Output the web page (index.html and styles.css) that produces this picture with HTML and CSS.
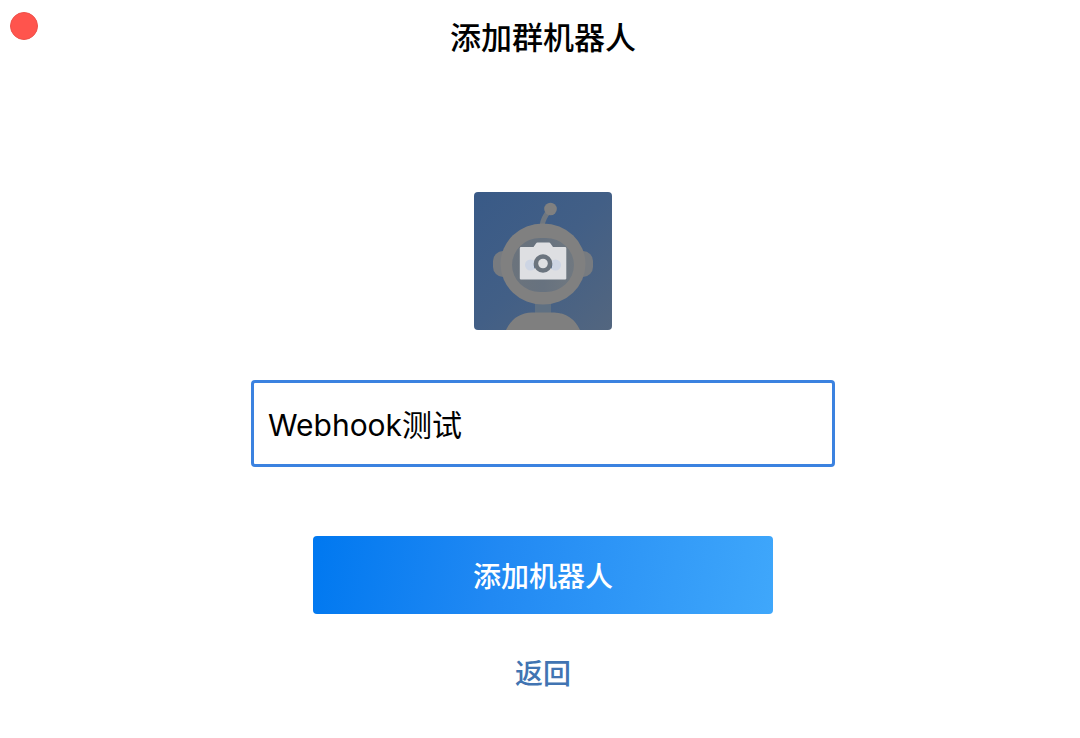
FILE: index.html
```
<!doctype html>
<html lang="zh-CN">

<head>
    <meta charset="utf-8">
    <title>添加群机器人</title>
    <link rel="stylesheet" href="styles.css">
</head>

<body>
    <header class="titlebar">
        <button type="button" class="close" aria-label="关闭"></button>
        <h1 class="title">添加群机器人</h1>
    </header>

    <form class="robot-form">
        <button type="button" class="avatar" aria-label="更换头像">
            <svg viewBox="0 0 138 138" aria-hidden="true">
                <defs>
                    <linearGradient id="sky" x1="0" y1="0" x2="1" y2="1">
                        <stop offset="0" stop-color="#395a87" />
                        <stop offset="0.5" stop-color="#425f86" />
                        <stop offset="1" stop-color="#53667f" />
                    </linearGradient>
                    <linearGradient id="visor" x1="0" y1="0" x2="1" y2="0">
                        <stop offset="0" stop-color="#6b737c" />
                        <stop offset="0.5" stop-color="#67727f" />
                        <stop offset="1" stop-color="#707880" />
                    </linearGradient>
                </defs>
                <rect width="138" height="138" fill="url(#sky)" />
                <!-- antenna -->
                <path d="M68 34Q69 26 75 19" fill="none" stroke="#6f7780" stroke-width="5" />
                <circle cx="76.5" cy="17" r="6.3" fill="#808080" />
                <!-- ears -->
                <rect x="19" y="59" width="20" height="26" rx="10" fill="#777b80" />
                <rect x="99" y="59" width="20" height="26" rx="10" fill="#777b80" />
                <!-- neck and body -->
                <rect x="61" y="110" width="16" height="14" fill="#5f7082" />
                <path d="M32 138Q40 121 58 120.5H80Q98 121 106 138Z" fill="#7f7f7f" />
                <!-- head and visor -->
                <ellipse cx="69" cy="72" rx="42.5" ry="40.5" fill="#808080" />
                <rect x="38" y="46" width="62" height="54" rx="28" fill="url(#visor)" />
                <!-- camera -->
                <path d="M47 55H59.5L62 51.5Q62.5 50.5 63.500 50.5H75Q76 50.5 76.5 51.5L79 55H91Q92.300 55 92.3 56.3V86.5Q92.3 87.5 91 87.5H47Q45.8 87.5 45.8 86.5V56.3Q45.8 55 47 55Z" fill="#dedfe2" />
                <circle cx="56.5" cy="73" r="5.5" fill="#cdd5e4" />
                <circle cx="81.5" cy="73" r="5.5" fill="#cdd5e4" />
                <path d="M61 69Q58.500 73 61 77ZM77 69Q79.500 73 77 77Z" fill="#3f5e8a" />
                <circle cx="69" cy="71.500" r="9.3" fill="#6b747e" />
                <circle cx="69" cy="71.500" r="4.8" fill="#dedfe2" />
            </svg>
        </button>
        <input type="text" class="name" aria-label="机器人名称" value="Webhook测试">
        <button type="submit" class="submit">添加机器人</button>
        <a href="#" class="back">返回</a>
    </form>
</body>

</html>
```
FILE: styles.css
```
* {
    box-sizing: border-box;
}

body {
    margin: 0;
    padding-left: 6px;
    background: #fff;
    color: #000;
    font-family: Inter, "Noto Sans CJK SC", sans-serif;
    font-weight: 500;
}

.titlebar {
    position: relative;
    padding: 18px 0;
    text-align: center;
}

.close {
    position: absolute;
    top: 12px;
    left: 4px;
    width: 28px;
    height: 28px;
    padding: 0;
    border: 1px solid #ee5049;
    border-radius: 50%;
    background: #ff544d;
}

.title {
    margin: 0;
    font-size: 31px;
    font-weight: 500;
    line-height: 40px;
}

.robot-form {
    display: flex;
    flex-direction: column;
    align-items: center;
    padding: 116px 20px 40px;
}

.avatar {
    width: 138px;
    height: 138px;
    padding: 0;
    border: 0;
    border-radius: 4px;
    overflow: hidden;
    background: none;
}

.avatar svg {
    display: block;
}

.name {
    width: 100%;
    max-width: 584px;
    height: 87px;
    margin-top: 50px;
    padding: 0 14px 2px;
    border: 3px solid #3b82e0;
    border-radius: 4px;
    outline: 0;
    color: #000;
    font-family: inherit;
    font-size: 30px;
}

.submit {
    width: 100%;
    max-width: 460px;
    height: 78px;
    margin-top: 69px;
    border: 0;
    border-radius: 4px;
    background: linear-gradient(100deg, #0078f0, #2189f3 40%, #3fa7fb);
    color: #fff;
    font-family: inherit;
    font-size: 28px;
    font-weight: 500;
}

.back {
    margin-top: 40px;
    color: #4174b2;
    font-size: 28px;
    line-height: 40px;
    text-decoration: none;
}
```
